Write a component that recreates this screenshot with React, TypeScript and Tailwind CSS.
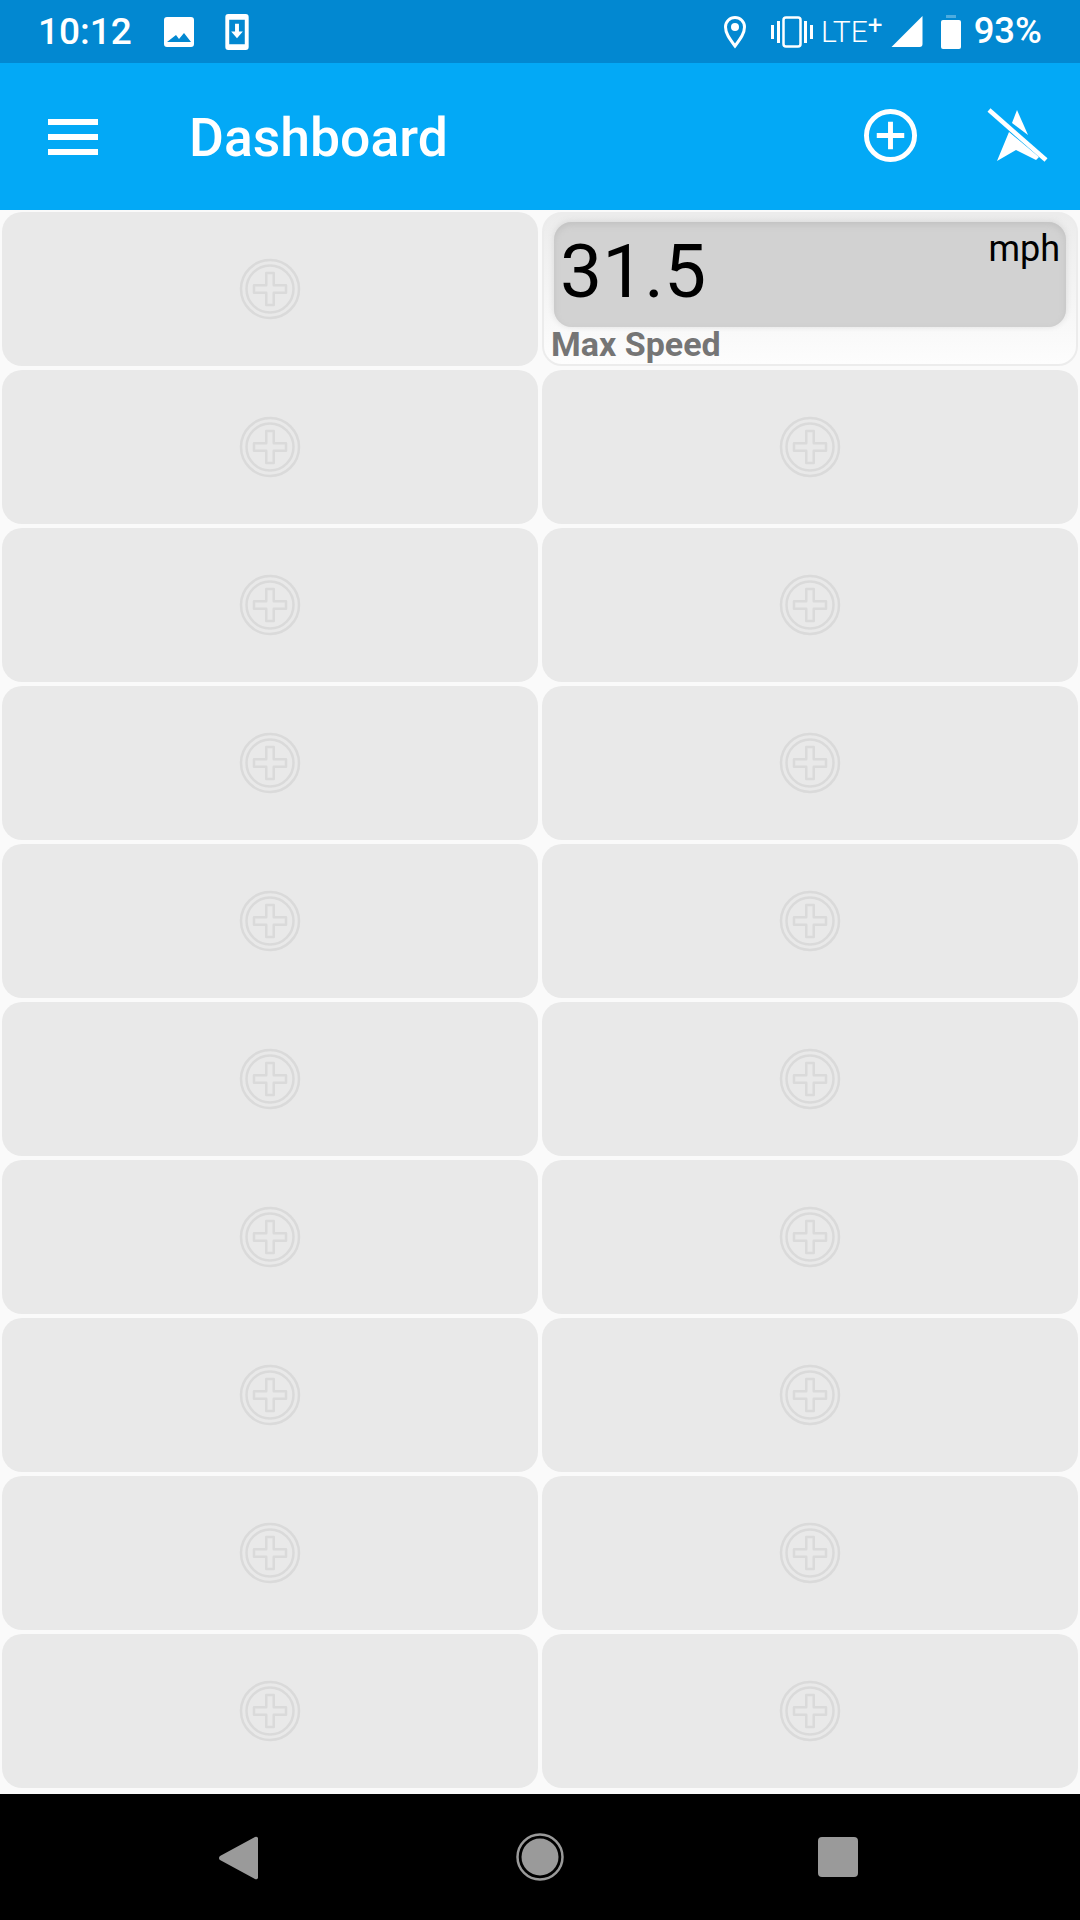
import React from 'react';

const roboto = { fontFamily: 'Roboto, sans-serif' };

const PlusBadge = () => (
  <svg className="blur-[0.4px]" width="62" height="62" viewBox="0 0 62 62" fill="none">
    <circle cx="31" cy="31" r="29" stroke="#dadada" strokeWidth="2.500" />
    <circle cx="31" cy="31" r="23.500" stroke="#dadada" strokeWidth="2.500" />
    <path
      d="M27.250 15h7.500v12.250H47v7.500H34.750V47h-7.500V34.750H15v-7.500h12.250z"
      stroke="#dadada"
      strokeWidth="2.500"
      strokeLinejoin="round"
    />
  </svg>
);

const EmptySlot = () => (
  <div className="h-[154px] rounded-[20px] bg-[#e9e9e9] flex items-center justify-center">
    <PlusBadge />
  </div>
);

const SpeedSlot = () => (
  <div className="h-[154px] rounded-[20px] border-2 border-[#ececec] bg-gradient-to-b from-[#ececec] via-[#f4f4f4] to-[#fdfdfd] pl-[10px] pr-[10px] pt-[8px] flex flex-col">
    <div className="h-[105px] rounded-[18px] bg-[#d2d2d2] shadow-[inset_0_3px_6px_#c2c2c2,0_-1px_6px_#d8d8d8] flex justify-between pl-[6px]">
      <span className="text-[75px] leading-[99px] text-black">31.5</span>
      <span className="text-[36px] leading-[40px] mt-[7px] mr-[6px] text-black">mph</span>
    </div>
    <span className="text-[34px] leading-[34px] font-bold text-[#757575] -ml-[3px]">Max Speed</span>
  </div>
);

export default function App() {
  const rows = Array.from({ length: 9 });

  return (
    <div className="w-[1080px] h-[1920px] bg-[#fafafa] flex flex-col overflow-hidden" style={roboto}>
      {/* Status bar */}
      <div className="h-[63px] bg-[#0288d1] text-white flex items-center justify-between pl-[38px] pr-[38px]">
        <div className="flex items-center">
          <span className="text-[37px] font-medium leading-none">10:12</span>
          <svg className="ml-[32px]" width="30" height="30" viewBox="0 0 30 30" fill="white">
            <path d="M3 0h24a3 3 0 0 1 3 3v24a3 3 0 0 1-3 3H3a3 3 0 0 1-3-3V3a3 3 0 0 1 3-3zM3 25h24l-7-9-5 6-3-4z" fillRule="evenodd" />
          </svg>
          <svg className="ml-[31px]" width="24" height="36" viewBox="0 0 24 37" fill="white">
            <path d="M3 0h18a3 3 0 0 1 3 3v31a3 3 0 0 1-3 3H3a3 3 0 0 1-3-3V3a3 3 0 0 1 3-3zM4 6v25h16V6zM10 10h4v8h4l-6 7-6-7h4z" fillRule="evenodd" />
          </svg>
        </div>
        <div className="flex items-center">
          <svg width="24" height="34" viewBox="0 0 24 34" fill="none">
            <path d="M12 31C6 23 2.500 18 2.500 12a9.500 9.500 0 0 1 19 0c0 6-3.500 11-9.500 19z" stroke="white" strokeWidth="3" />
            <circle cx="12" cy="12" r="4" fill="white" />
          </svg>
          <svg className="ml-[24px]" width="42" height="32" viewBox="0 0 42 32" fill="white">
            <rect x="0" y="9" width="3" height="14" />
            <rect x="6" y="5" width="3" height="22" />
            <rect x="12.500" y="1.500" width="17" height="29" rx="2.500" fill="none" stroke="white" strokeWidth="2.500" />
            <rect x="33" y="5" width="3" height="22" />
            <rect x="39" y="9" width="3" height="14" />
          </svg>
          <span className="ml-[8px] text-[30px] font-light leading-none">LTE</span>
          <span className="text-[26px] leading-none -mt-[14px]">+</span>
          <svg className="ml-[8px]" width="32" height="31" viewBox="0 0 32 32" fill="white">
            <path d="M32 0v29a3 3 0 0 1-3 3H0z" />
          </svg>
          <svg className="ml-[18px]" width="20" height="34" viewBox="0 0 20 34" fill="white">
            <path d="M5 3V0h10v3z" opacity="0.3" />
            <path d="M2 5h16a2 2 0 0 1 2 2v25a2 2 0 0 1-2 2H2a2 2 0 0 1-2-2V7a2 2 0 0 1 2-2z" />
          </svg>
          <span className="ml-[13px] text-[36.500px] font-medium leading-none">93%</span>
        </div>
      </div>

      {/* App bar */}
      <div className="h-[147px] bg-[#03a9f6] text-white flex items-center">
        <div className="ml-[48px] w-[50px] flex flex-col gap-[9px]">
          <div className="h-[6px] bg-white" />
          <div className="h-[6px] bg-white" />
          <div className="h-[6px] bg-white" />
        </div>
        <span className="ml-[91px] mt-[3px] text-[53.500px] font-medium leading-none">Dashboard</span>
        <svg className="ml-auto mb-[3px]" width="53" height="53" viewBox="0 0 54 54" fill="none">
          <circle cx="27" cy="27" r="24.500" stroke="white" strokeWidth="5" />
          <path d="M27 13v28M13 27h28" stroke="white" strokeWidth="5" />
        </svg>
        <svg className="ml-[70px] mr-[31px] mb-[1px]" width="62" height="56" viewBox="0 0 62 56" fill="white">
          <path d="M30 2l11 25-16-12z" />
          <path d="M22 24l-12 29 19-11 20 10 3-3z" />
          <path d="M2 2l57 50" stroke="white" strokeWidth="4.500" />
        </svg>
      </div>

      {/* Widget grid */}
      <div className="flex-1 grid grid-cols-2 gap-x-[4px] gap-y-[4px] px-[2px] pt-[2px] content-start">
        <EmptySlot />
        <SpeedSlot />
        {rows.map((_, i) => (
          <React.Fragment key={i}>
            <EmptySlot />
            <EmptySlot />
          </React.Fragment>
        ))}
      </div>

      {/* Navigation bar */}
      <div className="h-[126px] bg-black relative">
        <svg className="absolute left-[219px] top-[42px]" width="39" height="44" viewBox="0 0 39 44" fill="#9a9a9a">
          <path d="M36 1a2 2 0 0 1 3 2v38a2 2 0 0 1-3 2L1 24a2.500 2.500 0 0 1 0-4z" />
        </svg>
        <svg className="absolute left-[516px] top-[39px]" width="48" height="48" viewBox="0 0 48 48" fill="#9a9a9a">
          <circle cx="24" cy="24" r="22.500" fill="none" stroke="#9a9a9a" strokeWidth="2.500" />
          <circle cx="24" cy="24" r="18.500" />
        </svg>
        <div className="absolute left-[818px] top-[43px] w-[40px] h-[40px] rounded-[4px] bg-[#9a9a9a]" />
      </div>
    </div>
  );
}
